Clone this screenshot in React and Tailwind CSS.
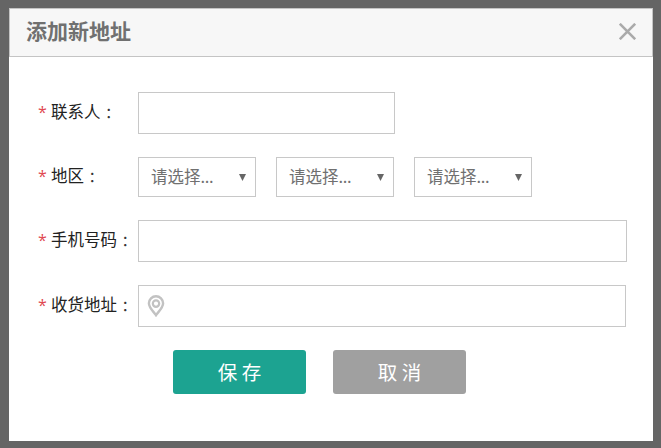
import React, { useState } from "react";

function Label({ children }) {
  return (
    <label className="w-[100px] shrink-0 pb-[2px] flex items-center text-[16.5px] leading-none text-[#222] whitespace-nowrap">
      <span className="w-[13px] pb-px text-[16px] leading-none text-[#e0484f] font-['Open_Sans',sans-serif]">*</span>
      <span className="pb-px">{children}</span>
      <span className="ml-[4.5px] pb-[2px] text-[15px] text-[#333]">：</span>
    </label>
  );
}

function RegionSelect() {
  return (
    <button
      type="button"
      className="w-[118px] h-[40px] pl-[12px] pr-[9px] flex items-center justify-between border border-[#c8c8c8] bg-white text-[16.5px] leading-none text-[#707070]"
    >
      <span className="pb-px">
        请选择<span className="tracking-[-0.3px]">...</span>
      </span>
      <svg width="7" height="7" viewBox="0 0 7 7" fill="#666">
        <path d="M0 0h7L3.5 7z" />
      </svg>
    </button>
  );
}

export default function App() {
  const [formData, setFormData] = useState({
    contact: "",
    phone: "",
    address: "",
  });

  // handle input changes
  const handleChange = (e) => {
    setFormData({ ...formData, [e.target.name]: e.target.value });
  };

  return (
    <div className="w-[661px] h-[448px] bg-[#656565] pt-[8px] pl-[9px] overflow-hidden font-['Noto_Sans_CJK_SC',sans-serif]">
      <div className="w-[644px] h-[433px] bg-white">
        <div className="h-[49px] pl-[16px] pr-[16px] pb-[2px] flex items-center justify-between bg-[#f7f7f7] border border-[#c4c4c4]">
          <h1 className="pb-[2px] text-[21px] leading-none font-bold text-[#707070]">添加新地址</h1>
          <button type="button" aria-label="关闭">
            <svg width="17" height="17" viewBox="0 0 17 17" fill="none" stroke="#aaa" strokeWidth="2.6">
              <path d="M0.8 0.8l15.4 15.4M16.2 0.8L0.8 16.2" />
            </svg>
          </button>
        </div>

        <form className="pl-[29px] pt-[35px]" onSubmit={(e) => e.preventDefault()}>
          <div className="flex items-center h-[42px]">
            <Label>联系人</Label>
            <input
              name="contact"
              value={formData.contact}
              onChange={handleChange}
              className="w-[257px] h-[42px] px-3 border border-[#c8c8c8] focus:outline-none"
            />
          </div>

          <div className="flex items-center h-[40px] mt-[23px]">
            <Label>地区</Label>
            <div className="flex gap-[20px]">
              <RegionSelect />
              <RegionSelect />
              <RegionSelect />
            </div>
          </div>

          <div className="flex items-center h-[42px] mt-[23px]">
            <Label>手机号码</Label>
            <input
              name="phone"
              value={formData.phone}
              onChange={handleChange}
              className="w-[489px] h-[42px] px-3 border border-[#c8c8c8] focus:outline-none"
            />
          </div>

          <div className="flex items-center h-[42px] mt-[23px]">
            <Label>收货地址</Label>
            <div className="w-[488px] h-[42px] pl-[8px] flex items-center border border-[#c8c8c8]">
              <svg width="18" height="22" viewBox="0 0 18 22" fill="none" stroke="#c2c2c2">
                <path d="M9 20.2C7 17 1.9 13 1.9 8.3a7.1 7.1 0 0 1 14.2 0C16.1 13 11 17 9 20.2z" strokeWidth="2.4" />
                <circle cx="9" cy="8.6" r="3.2" strokeWidth="2.2" />
              </svg>
              <input
                name="address"
                value={formData.address}
                onChange={handleChange}
                className="flex-1 h-full px-2 focus:outline-none"
              />
            </div>
          </div>

          <div className="flex gap-[27px] mt-[23px] pl-[135px]">
            <button
              type="submit"
              className="w-[133px] h-[44px] rounded-[3px] bg-[#1ca391] text-[19.5px] leading-none text-white"
            >
              保 存
            </button>
            <button
              type="button"
              className="w-[133px] h-[44px] rounded-[3px] bg-[#a0a0a0] text-[19.5px] leading-none text-white"
            >
              取 消
            </button>
          </div>
        </form>
      </div>
    </div>
  );
}
